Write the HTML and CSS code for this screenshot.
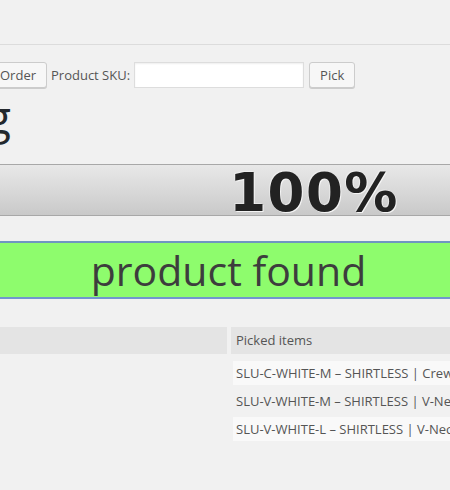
FILE: index.html
```html
<!DOCTYPE html>
<html>
<head>
<meta charset="utf-8">
<link rel="stylesheet" href="styles.css">
</head>
<body>
<div class="page">
  <div class="topline"></div>
  <div class="toolbar">
    <button class="btn btn-order">Order</button>
    <label class="sku-label">Product SKU:</label>
    <input class="sku-input" type="text">
    <button class="btn btn-pick">Pick</button>
  </div>
  <div class="title-clip"><h1 class="title">Order Picking</h1></div>
  <div class="progress"><span class="progress-text">100%</span></div>
  <div class="status">product found</div>
  <div class="table">
    <div class="col">
      <div class="th"></div>
    </div>
    <div class="col">
      <div class="th">Picked items</div>
      <div class="rows">
        <div class="row odd">SLU-C-WHITE-M – SHIRTLESS | Crew Neck | White | M</div>
        <div class="row">SLU-V-WHITE-M – SHIRTLESS | V-Neck | White | M</div>
        <div class="row odd">SLU-V-WHITE-L – SHIRTLESS | V-Neck | White | L</div>
      </div>
    </div>
  </div>
</div>
</body>
</html>
```

FILE: styles.css
```css
html, body {
  margin: 0;
  padding: 0;
  overflow: hidden;
  background: #f1f1f1;
}
.page {
  width: 450px;
  height: 490px;
  overflow: hidden;
  font-family: "Open Sans", sans-serif;
  color: #444;
}
.topline {
  margin-top: 44px;
  border-top: 1px solid #dcdcdc;
}
.toolbar {
  display: flex;
  align-items: center;
  gap: 5px;
  margin-top: 16px;
  height: 27px;
}
.btn {
  font-family: "Open Sans", sans-serif;
  font-size: 13px;
  color: #555;
  background: #f7f7f7;
  border: 1px solid #cccccc;
  border-radius: 3px;
  box-shadow: 0 1px 0 #cccccc;
  height: 26px;
  padding: 0 10px;
  line-height: 24px;
}
.btn-order {
  margin-left: -11px;
}
.btn-pick {
  padding: 0 10px;
}
.sku-label {
  font-size: 13px;
  color: #555;
  margin-left: -1px;
}
.sku-input {
  width: 170px;
  height: 26px;
  box-sizing: border-box;
  border: 1px solid #dddddd;
  background: #fff;
  box-shadow: inset 0 1px 2px rgba(0,0,0,0.07);
  margin: 0 0 0 -1px;
}
.title-clip {
  display: flex;
  justify-content: flex-end;
  width: 11px;
  margin-top: 7px;
}
.title {
  margin: 0;
  white-space: nowrap;
  font-family: "Open Sans", sans-serif;
  font-weight: 400;
  font-size: 45px;
  line-height: 44px;
  color: #23282d;
}
.progress {
  margin: 25px -278px 0 -100px;
  height: 44px;
  padding-top: 6px;
  border-top: 1px solid #a8a8a8;
  border-bottom: 1px solid #a8a8a8;
  background: linear-gradient(#e8e8e8, #d9d9d9 50%, #c9c9c9);
  text-align: center;
  font-family: "DejaVu Sans", sans-serif;
  font-weight: 700;
  font-size: 53px;
  letter-spacing: 1.5px;
  line-height: 44px;
  color: #222;
}
.progress-text {
  text-shadow: 1px 1px 0 #f4f4f4, -1px -1px 0 rgba(255,255,255,0.4);
}
.status {
  margin: 25px -107px 0 -100px;
  height: 54px;
  border-top: 2px solid #6f95c2;
  border-bottom: 2px solid #7196cf;
  background: #8efc6d;
  text-align: center;
  font-size: 41px;
  font-weight: 500;
  line-height: 55px;
  color: #3d3d3d;
}
.table {
  display: grid;
  grid-template-columns: 327px 400px;
  column-gap: 4px;
  margin: 28px 0 0 -100px;
}
.th {
  height: 27px;
  background: #e4e4e4;
  font-size: 13px;
  line-height: 27px;
  padding-left: 5px;
  color: #555;
  white-space: nowrap;
}
.rows {
  display: flex;
  flex-direction: column;
  gap: 4px;
  margin-top: 7px;
  margin-left: 2px;
}
.row {
  height: 24px;
  line-height: 24px;
  padding-left: 3px;
  font-size: 13px;
  color: #555;
  white-space: nowrap;
}
.row.odd {
  background: #f9f9f9;
}
```
